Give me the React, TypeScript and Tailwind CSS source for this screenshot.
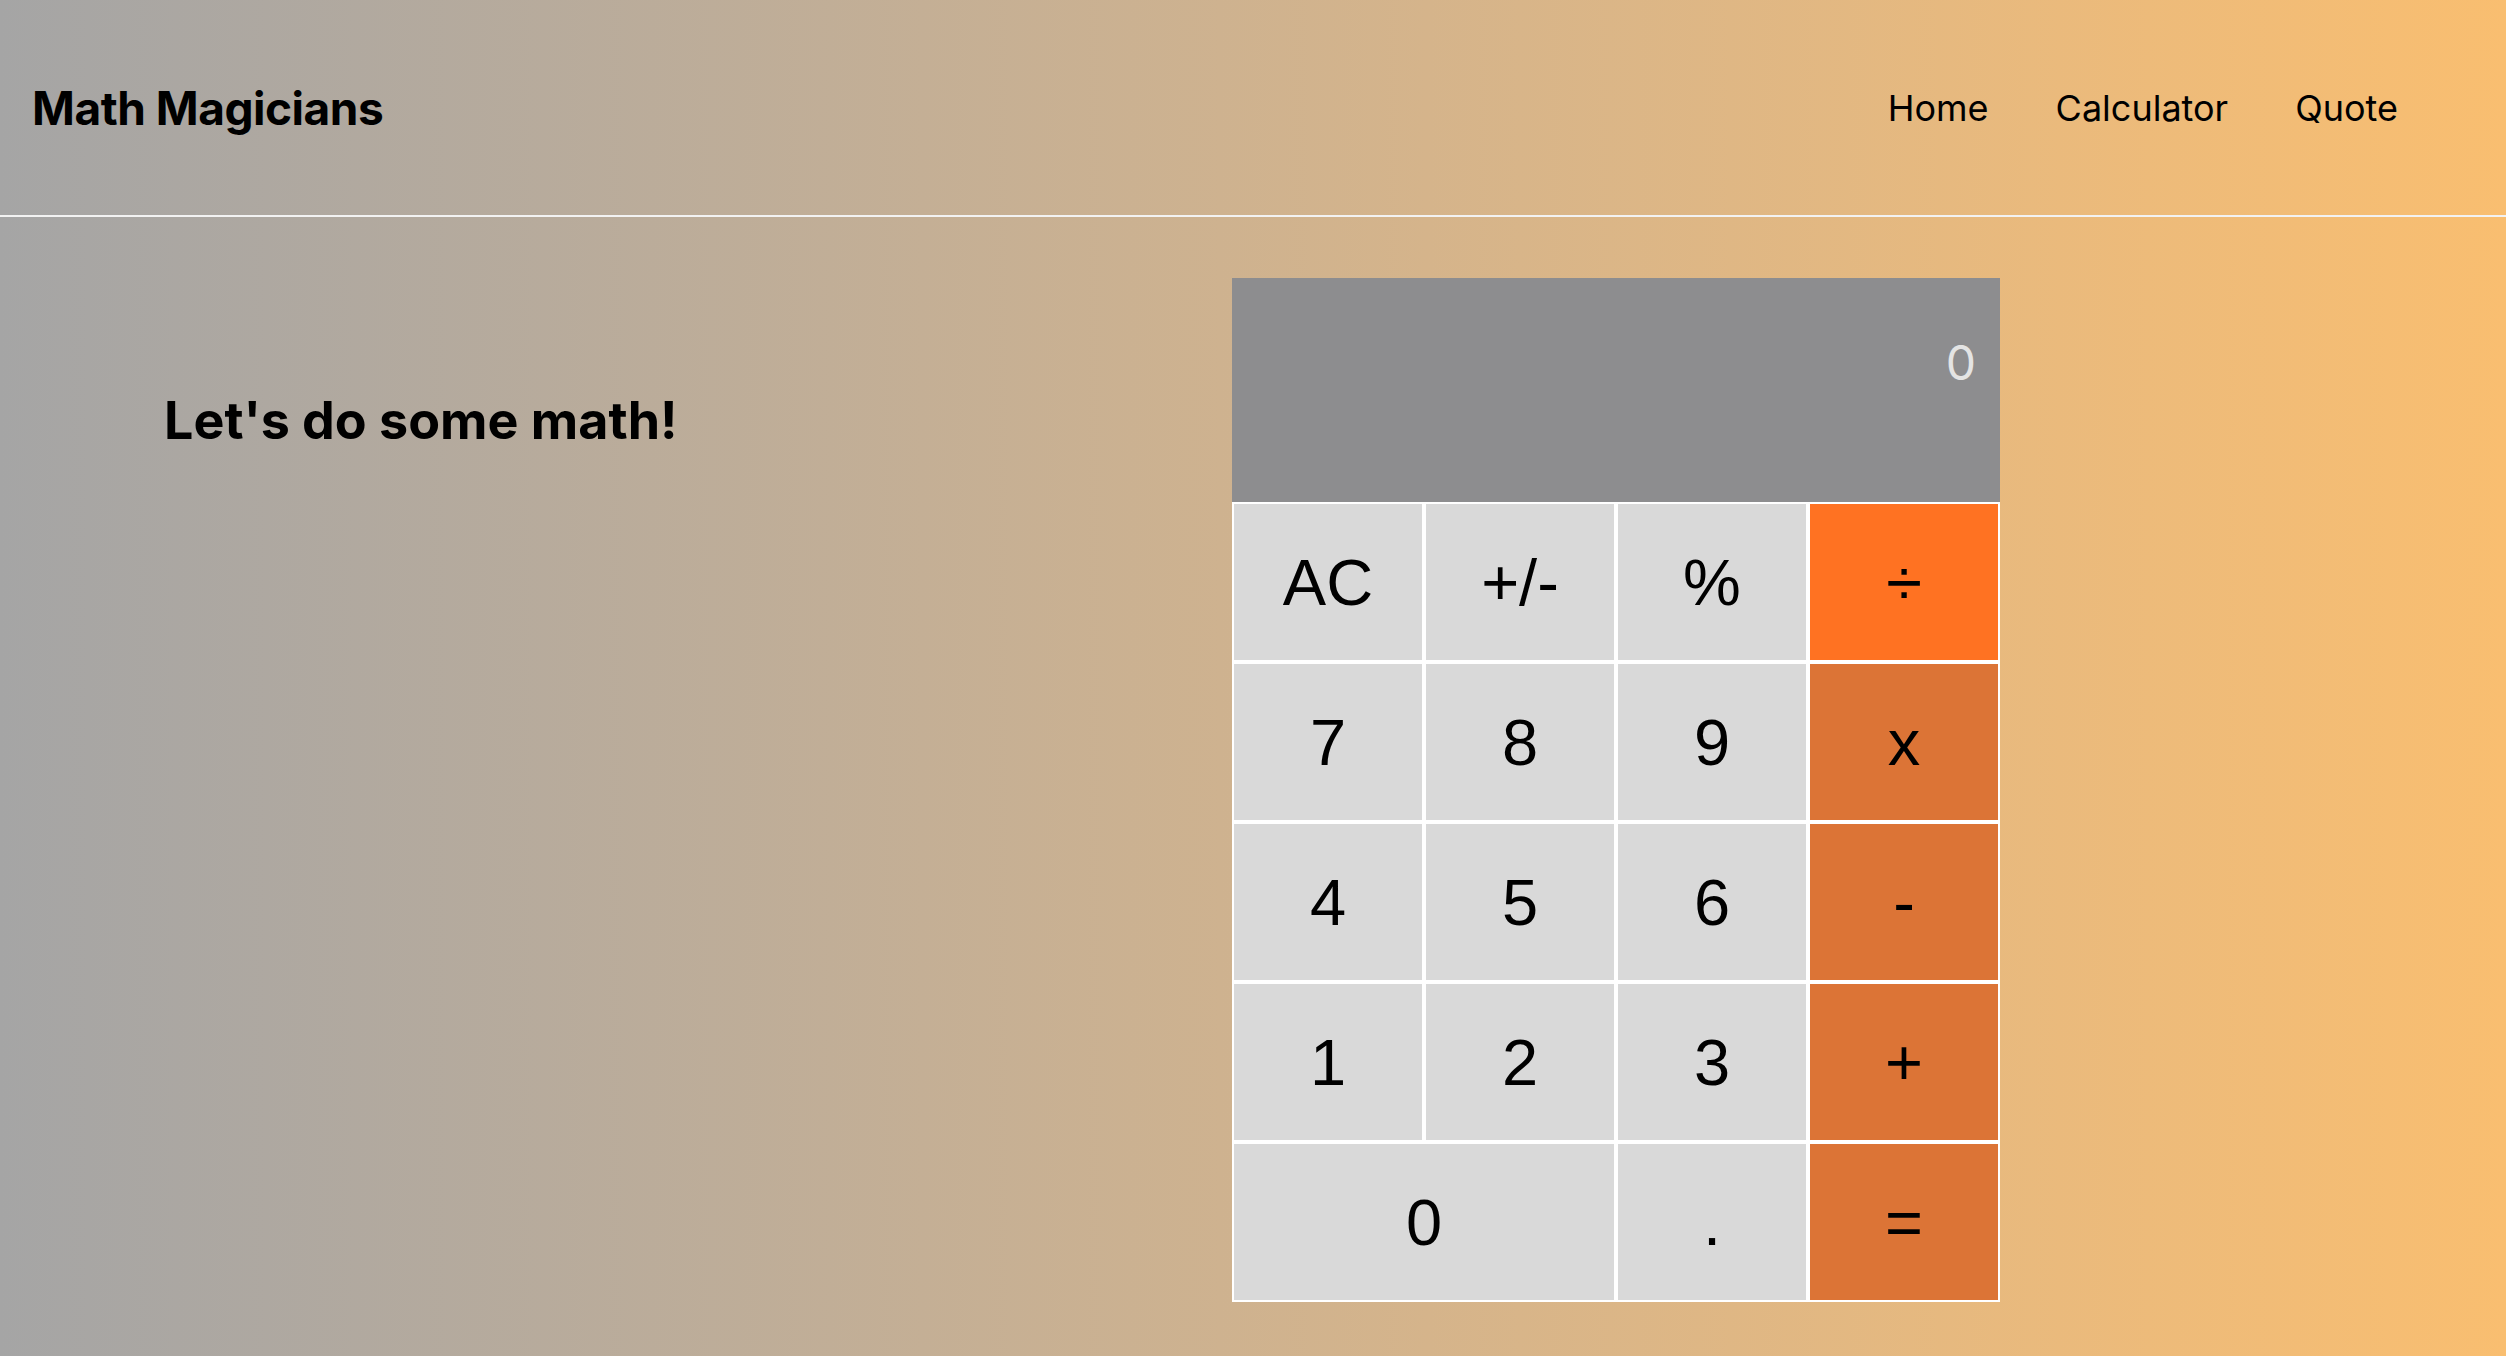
import React from "react";

const keys: { label: string; kind: "fn" | "num" | "op" | "opActive"; wide?: boolean }[] = [
  { label: "AC", kind: "fn" },
  { label: "+/-", kind: "fn" },
  { label: "%", kind: "fn" },
  { label: "÷", kind: "opActive" },
  { label: "7", kind: "num" },
  { label: "8", kind: "num" },
  { label: "9", kind: "num" },
  { label: "x", kind: "op" },
  { label: "4", kind: "num" },
  { label: "5", kind: "num" },
  { label: "6", kind: "num" },
  { label: "-", kind: "op" },
  { label: "1", kind: "num" },
  { label: "2", kind: "num" },
  { label: "3", kind: "num" },
  { label: "+", kind: "op" },
  { label: "0", kind: "num", wide: true },
  { label: ".", kind: "num" },
  { label: "=", kind: "op" },
];

function Calculator() {
  return (
    <div className="grid w-[768px] grid-cols-4">
      <div className="col-span-4 flex h-[224px] justify-end bg-[#8d8d8f] pr-6 pt-[61px]">
        <span className="text-[48px] leading-none text-[#e4e4e4]">0</span>
      </div>
      {keys.map((k) => (
        <button
          key={k.label}
          type="button"
          className={[
            "flex h-[160px] items-center justify-center border-2 border-white text-[65px] leading-none text-black",
            k.wide ? "col-span-2" : "",
            k.kind === "opActive"
              ? "bg-[#ff7222]"
              : k.kind === "op"
              ? "bg-[#dc7436]"
              : "bg-[#d9d9d9]",
          ].join(" ")}
          style={{ fontFamily: '"Liberation Sans", Arial, sans-serif' }}
        >
          {k.label}
        </button>
      ))}
    </div>
  );
}

export default function App() {
  return (
    <div
      className="min-h-screen bg-gradient-to-r from-[#a5a5a5] to-[#f9be70] text-black"
      style={{ fontFamily: 'Inter, "Noto Sans", sans-serif' }}
    >
      <header className="flex h-[217px] items-center justify-between border-b-2 border-[#f2f2f2] pl-8 pr-[108px]">
        <h1 className="text-[46px] font-bold leading-none tracking-[-0.01em]">Math Magicians</h1>
        <nav className="flex items-center gap-[67px] text-[36px] leading-none">
          <a href="#">Home</a>
          <a href="#">Calculator</a>
          <a href="#">Quote</a>
        </nav>
      </header>

      <main className="flex pt-[61px]">
        <div className="w-[1232px] pl-[164px] pt-[117px]">
          <h2 className="text-[52px] font-bold leading-none">Let's do some math!</h2>
        </div>
        <Calculator />
      </main>
    </div>
  );
}
